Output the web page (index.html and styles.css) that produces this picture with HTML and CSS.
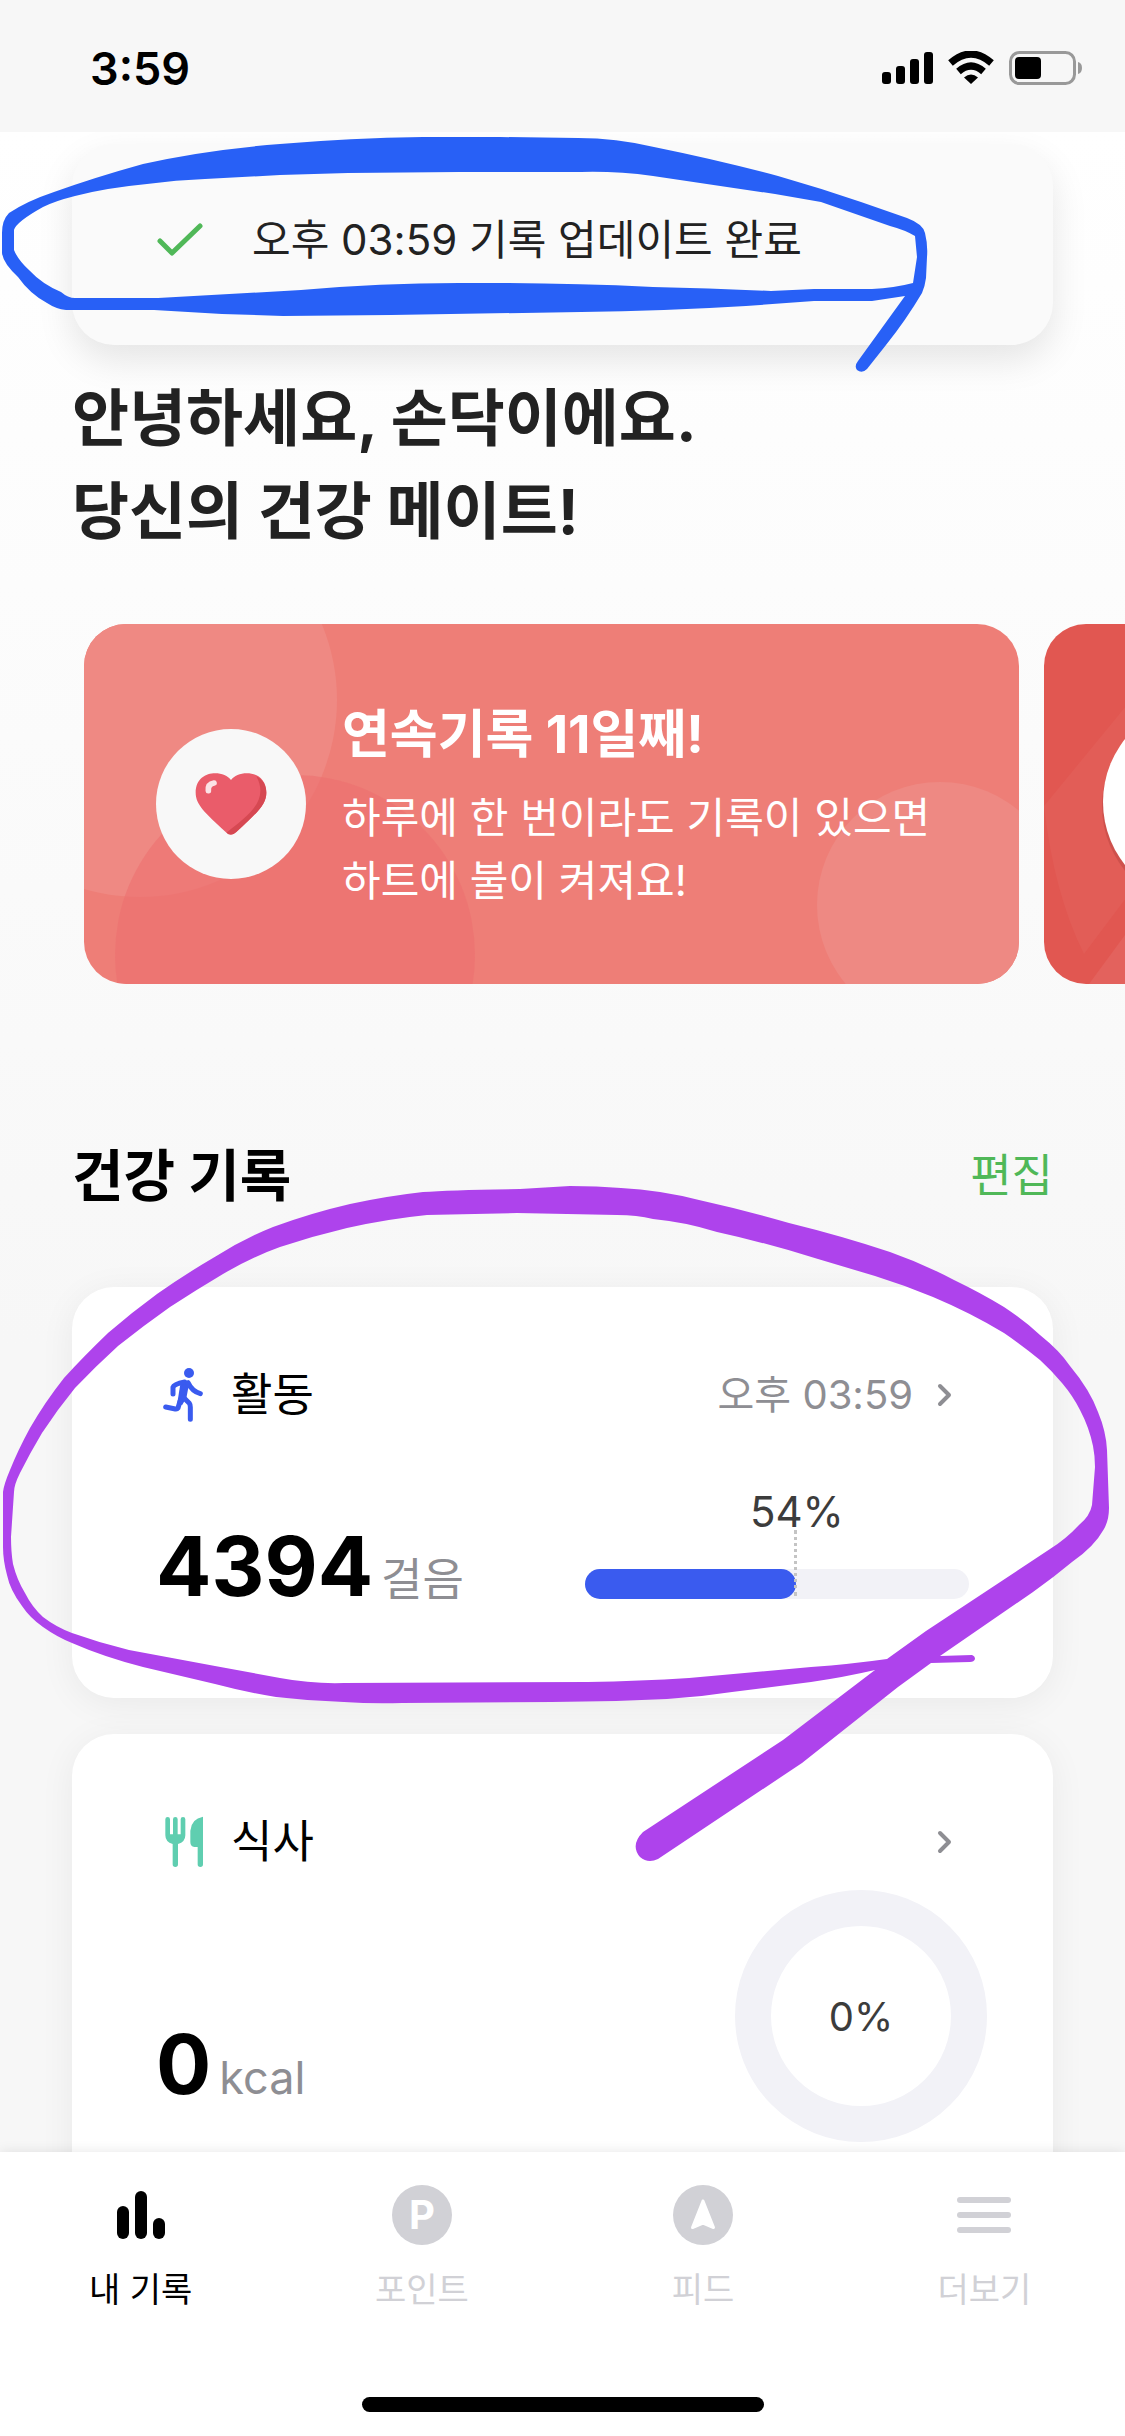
FILE: index.html
```html
<!DOCTYPE html>
<html lang="ko">
<head>
<meta charset="utf-8">
<meta name="viewport" content="width=device-width, initial-scale=1">
<title>내 기록</title>
<link rel="stylesheet" href="styles.css">
</head>
<body>
<div class="app">
  <header class="status">
    <time class="clock">3:59</time>
    <svg class="status-icons" width="202" height="36" viewBox="0 0 202 36" aria-hidden="true">
      <rect x="0" y="21" width="9" height="12" rx="3"/>
      <rect x="14" y="15" width="9" height="18" rx="3"/>
      <rect x="28" y="8" width="9" height="25" rx="3"/>
      <rect x="42" y="1" width="9" height="32" rx="3"/>
      <path d="M89 33 L82 26.500 Q89 20.500 96 26.500 Z"/>
      <path d="M76.500 20.500 Q89 9.500 101.500 20.500" fill="none" stroke="#000" stroke-width="7"/>
      <path d="M68.500 12 Q89 -6 109.500 12" fill="none" stroke="#000" stroke-width="7"/>
      <rect x="128.500" y="1.500" width="64" height="31" rx="9" fill="none" stroke="#999" stroke-width="3"/>
      <rect x="133" y="6" width="26" height="22" rx="4"/>
      <path d="M196 11 Q200 12 200 17 Q200 22 196 23 Z" fill="#999"/>
    </svg>
  </header>

  <main class="content">
    <div class="toast" role="status">
      <svg width="48" height="36" viewBox="0 0 48 36" aria-hidden="true"><path d="M4 19 L16 31 L44 4" fill="none" stroke="#50b858" stroke-width="5" stroke-linecap="round" stroke-linejoin="round"/></svg>
      <span>오후 03:59 기록 업데이트 완료</span>
    </div>

    <h1 class="greeting">안녕하세요, 손닥이에요.<br>당신의 건강 메이트!</h1>

    <div class="carousel">
      <article class="banner">
        <svg class="banner-art" viewBox="0 0 935 360" preserveAspectRatio="none" aria-hidden="true">
          <rect width="935" height="360" fill="#ee7e77"/>
          <circle cx="56" cy="76" r="197" fill="#ef8983"/>
          <circle cx="211" cy="331" r="180" fill="#ed6f6f" fill-opacity=".6"/>
          <circle cx="856" cy="281" r="123" fill="#ee8983"/>
        </svg>
        <div class="badge">
          <svg width="72" height="64" viewBox="0 0 216 192" aria-hidden="true">
            <path d="M108 24 C86 -8 2 -8 2 62 C2 98 30 122 92 180 Q108 196 124 180 C186 122 214 98 214 62 C214 -8 130 -8 108 24 Z" fill="#ea5c6a"/>
            <path d="M184 13 C206 24 214 42 214 62 C214 98 186 122 124 180 Q108 194 94 182 C150 136 226 90 184 13 Z" fill="#d64852"/>
            <path d="M40 56 Q38 36 57 33" fill="none" stroke="#fbe3e6" stroke-width="17" stroke-linecap="round"/>
          </svg>
        </div>
        <div class="banner-text">
          <h2>연속기록 11일째!</h2>
          <p>하루에 한 번이라도 기록이 있으면<br>하트에 불이 켜져요!</p>
        </div>
      </article>
      <article class="banner next-banner">
        <svg class="banner-art" viewBox="0 0 935 360" aria-hidden="true">
          <rect width="935" height="360" fill="#e15751"/>
          <path d="M0 182 L100 60 V250 L40 330 Q10 270 0 182 Z" fill="#e25d57"/>
          <path d="M45 360 L100 285 V360 Z" fill="#e3625d"/>
          <circle cx="160" cy="182" r="102" fill="#b94641" fill-opacity=".5"/>
          <circle cx="160" cy="178" r="101" fill="#fff"/>
        </svg>
      </article>
    </div>

    <div class="section-head">
      <h2>건강 기록</h2>
      <button type="button" class="edit">편집</button>
    </div>

    <section class="card">
      <a class="card-head" href="#activity">
        <svg width="40" height="56" viewBox="71 83 120 168" aria-hidden="true">
          <circle cx="149" cy="101" r="15" fill="#3a5bef"/>
          <path d="M124 128 Q140 118 150 130 L141 176 L128 198 L114 190 Z" fill="#3a5bef"/>
          <g fill="none" stroke="#3a5bef" stroke-width="15" stroke-linecap="round" stroke-linejoin="round">
            <path d="M136 128 Q104 134 101 144 V164"/>
            <path d="M146 130 Q158 156 183 163"/>
            <path d="M132 174 L150 192 Q153 196 153 204 V240"/>
            <path d="M122 186 L116 206 Q113 210 108 209 L79 203"/>
          </g>
        </svg>
        <span class="card-name">활동</span>
        <span class="card-time">오후 03:59</span>
        <svg class="chevron" width="16" height="24" viewBox="0 0 16 24" aria-hidden="true"><path d="M3 3 L12 12 L3 21" fill="none" stroke="#8e8e93" stroke-width="4" stroke-linecap="round" stroke-linejoin="round"/></svg>
      </a>
      <div class="card-body">
        <p class="value"><strong>4394</strong><span>걸음</span></p>
        <div class="progress">
          <div class="bar"><div class="fill" style="width:54.925%"></div></div>
          <div class="marker" style="left:54.925%"><span>54%</span></div>
        </div>
      </div>
    </section>

    <section class="card meal">
      <a class="card-head" href="#meal">
        <svg width="40" height="56" viewBox="71 72 120 168" aria-hidden="true" fill="#5fceb0">
          <path d="M78 88 a7 7 0 0 1 14 0 V133 H101 V88 a7 7 0 0 1 14 0 V133 H124 V88 a7 7 0 0 1 14 0 V136 Q138 156 116 162 V223 a8 8 0 0 1 -16 0 V162 Q78 156 78 136 Z"/>
          <path d="M191 80 V223 a8 8 0 0 1 -16 0 V171 H165 Q153 169 153 156 V122 Q156 86 191 80 Z"/>
        </svg>
        <span class="card-name">식사</span>
        <svg class="chevron" width="16" height="24" viewBox="0 0 16 24" aria-hidden="true"><path d="M3 3 L12 12 L3 21" fill="none" stroke="#8e8e93" stroke-width="4" stroke-linecap="round" stroke-linejoin="round"/></svg>
      </a>
      <div class="card-body">
        <p class="value"><strong>0</strong><span>kcal</span></p>
        <div class="ring">0%</div>
      </div>
    </section>
  </main>

  <nav class="tabs">
    <a class="tab active" href="#records">
      <svg width="60" height="60" viewBox="0 0 60 60" aria-hidden="true"><rect x="6" y="21" width="12" height="33" rx="6"/><rect x="24" y="6" width="12" height="48" rx="6"/><rect x="42" y="33" width="12" height="21" rx="6"/></svg>
      <span>내 기록</span>
    </a>
    <a class="tab" href="#points">
      <span class="coin">P</span>
      <span>포인트</span>
    </a>
    <a class="tab" href="#feed">
      <svg width="60" height="60" viewBox="0 0 60 60" aria-hidden="true"><circle cx="30" cy="30" r="30"/><path d="M30 16 L19.500 42.500 L30 38 L40.500 42.500 Z" fill="#fff" stroke="#fff" stroke-width="3" stroke-linejoin="round"/></svg>
      <span>피드</span>
    </a>
    <a class="tab" href="#more">
      <svg width="60" height="60" viewBox="0 0 60 60" aria-hidden="true"><rect x="3" y="12" width="54" height="6" rx="3"/><rect x="3" y="27" width="54" height="6" rx="3"/><rect x="3" y="42" width="54" height="6" rx="3"/></svg>
      <span>더보기</span>
    </a>
  </nav>
  <div class="home"><div class="home-bar"></div></div>

  <!-- hand-drawn marker strokes -->
  <svg class="markup" viewBox="0 0 1125 2436" aria-hidden="true" fill-rule="evenodd">
    <path fill="#2860f6" d="M423 137 L500 137 L578 138 Q616 138 654 147 Q718 160 778 176 Q820 188 861 202 L907 218 Q923 224 925 233 Q928 245 927 257 L926 278 Q925 286 922 293 Q906 320 886 345 L867 369 Q862 374 857 370 Q854 366 858 361 L905 296 L872 301 L814 301 L746 306 Q664 311 581 312 L391 315 L283 316 L222 314 L154 310 L66 310 Q56 309 47 303 Q30 294 18 277 Q3 263 2 253 L2 233 Q2 220 9 213 Q27 201 54 192 Q96 177 143 164 Q205 150 280 144 Q350 138 423 137 Z
      M459 172 L348 173 L280 175 L205 179 Q176 180 147 184 Q105 188 75 196 Q55 201 43 207 Q16 222 14 230 L14 250 Q18 260 29 270 Q42 284 61 292 Q68 298 75 298 L158 298 L301 290 Q380 283 459 283 L491 283 Q570 283 653 287 Q712 288 771 291 L814 289 L872 289 Q894 288 913 283 L917 257 L915 236 Q905 230 890 226 L821 202 L775 194 L653 176 Q616 171 581 172 Z"/>
    <path fill="#ae43ec" d="M570 1186 Q597 1186 621 1188 Q660 1190 699 1200 Q744 1210 789 1223 Q842 1236 890 1252 Q924 1264 954 1280 Q981 1293 1004 1307 Q1025 1321 1040 1335 Q1060 1351 1070 1366 Q1090 1390 1098 1412 Q1106 1431 1107 1450 L1109 1508 Q1109 1520 1104 1529 Q1094 1547 1072 1562 Q1054 1577 1033 1592 L940 1656 L972 1655 Q975 1656 975 1659 Q974 1662 970 1662 L931 1663 L898 1687 L802 1763 L658 1859 Q648 1864 640 1857 Q630 1845 643 1832 L783 1740 L875 1670 Q845 1677 811 1682 L732 1692 Q700 1697 667 1699 Q610 1702 552 1702 L402 1703 Q373 1704 344 1702 Q310 1701 276 1697 Q245 1692 215 1684 L143 1667 Q104 1657 72 1643 Q57 1637 43 1627 Q30 1618 22 1606 Q10 1590 7 1575 Q3 1560 3 1547 L3 1492 Q4 1484 10 1470 Q18 1450 30 1428 Q45 1402 64 1378 Q84 1356 108 1333 Q131 1313 157 1294 Q184 1275 213 1258 Q243 1239 273 1227 Q311 1213 350 1204 Q387 1196 423 1192 Q450 1190 520 1189 Z
      M517 1213 L427 1215 Q387 1219 347 1228 Q313 1236 280 1247 Q252 1257 223 1274 Q196 1290 170 1307 Q143 1326 118 1346 Q96 1366 75 1388 Q57 1410 42 1433 Q30 1453 20 1473 Q14 1485 14 1492 L11 1537 Q11 1552 13 1564 Q17 1580 25 1593 Q32 1607 43 1617 Q56 1627 72 1633 Q100 1643 129 1650 L215 1666 L280 1678 Q312 1684 344 1683 L588 1682 Q640 1681 689 1678 L811 1667 Q852 1664 887 1659 L926 1631 L1050 1549 Q1066 1539 1079 1525 Q1090 1516 1092 1505 L1095 1467 Q1095 1456 1093 1446 Q1089 1427 1080 1410 Q1073 1396 1062 1383 Q1052 1371 1040 1360 Q1023 1346 1004 1333 Q971 1313 933 1297 Q904 1285 875 1276 L818 1259 Q767 1243 717 1232 Q685 1222 653 1219 Q637 1215 617 1215 Z"/>
  </svg>
</div>
</body>
</html>
```
FILE: styles.css
```css
* {
  box-sizing: border-box;
}

body,
h1,
h2,
p {
  margin: 0;
}

body {
  font-family: Inter, "Noto Sans CJK KR", sans-serif;
  color: #000;
}

a {
  color: inherit;
  text-decoration: none;
}

.app {
  position: relative;
  display: flex;
  flex-direction: column;
  height: 100vh;
  overflow: hidden;
  background: #fff;
}

.status {
  flex: none;
  display: flex;
  align-items: center;
  justify-content: space-between;
  height: 132px;
  padding: 6px 41px 0 90px;
  background: #f7f7f7;
}

.clock {
  font-size: 45px;
  font-weight: 600;
  line-height: 54px;
}

.content {
  flex: 1;
  min-height: 0;
  overflow: hidden;
  padding: 12px 72px 0;
  background: linear-gradient(#fff, #f7f7f7 60%);
}

.toast {
  display: flex;
  align-items: center;
  gap: 48px;
  height: 201px;
  padding: 0 84px 9px;
  border-radius: 42px;
  background: #fafafa;
  box-shadow: 0 15px 36px rgba(0, 0, 0, 0.1);
  color: #222;
  font-size: 42px;
  line-height: 60px;
}

.greeting {
  margin-top: 27px;
  color: #222;
  font-size: 62px;
  font-weight: 700;
  line-height: 93px;
}

.carousel {
  display: flex;
  gap: 25px;
  margin: 66px -72px 0 12px;
  overflow: hidden;
}

.banner {
  position: relative;
  flex: none;
  display: flex;
  align-items: center;
  gap: 36px;
  width: calc(100vw - 190px);
  height: 360px;
  padding: 0 72px;
  border-radius: 42px;
  overflow: hidden;
  color: #fff;
}

.banner-art {
  position: absolute;
  inset: 0;
  width: 100%;
  height: 100%;
}

.badge {
  position: relative;
  display: grid;
  place-items: center;
  width: 150px;
  height: 150px;
  border-radius: 50%;
  background: #f8f8f8;
}

.banner-text {
  position: relative;
  padding-top: 9px;
}

.banner-text h2 {
  margin-bottom: 21px;
  font-size: 52px;
  font-weight: 700;
  line-height: 60px;
}

.banner-text p {
  font-size: 42px;
  line-height: 63px;
}

.section-head {
  display: flex;
  align-items: center;
  justify-content: space-between;
  margin: 156px 0 75px;
}

.section-head h2 {
  font-size: 56px;
  font-weight: 700;
  line-height: 72px;
}

.edit {
  padding: 0;
  border: 0;
  background: none;
  color: #50b858;
  font-family: inherit;
  font-size: 45px;
  line-height: 60px;
}

.card {
  display: flex;
  flex-direction: column;
  height: 411px;
  margin-bottom: 36px;
  padding: 78px 84px;
  border-radius: 42px;
  background: #fff;
  box-shadow: 0 6px 36px rgba(0, 0, 0, 0.06);
}

.card-head {
  display: flex;
  align-items: center;
  height: 60px;
  padding: 0 16px 0 7px;
}

.card-name {
  margin: 0 auto 0 28px;
  font-size: 45px;
  line-height: 60px;
}

.card-time {
  margin-right: 24px;
  color: #8e8e93;
  font-size: 40px;
  line-height: 60px;
}

.card-body {
  display: flex;
  align-items: flex-end;
  justify-content: space-between;
  margin-top: 94px;
}

.value {
  display: flex;
  align-items: baseline;
  gap: 8px;
  line-height: 96px;
}

.value strong {
  font-size: 82px;
  font-weight: 700;
}

.value span {
  color: #8e8e93;
  font-size: 45px;
}

.progress {
  position: relative;
  width: 384px;
  padding-bottom: 29px;
}

.bar {
  height: 30px;
  border-radius: 15px;
  background: #f2f2f7;
}

.fill {
  height: 100%;
  border-radius: 15px;
  background: #3a5bef;
}

.marker {
  position: absolute;
  bottom: 32px;
  display: flex;
  justify-content: center;
  width: 0;
  height: 66px;
  margin-left: -2px;
  border-left: 3px dotted #c4c4c4;
}

.marker span {
  position: absolute;
  bottom: 60px;
  color: #3c3c3c;
  font-size: 42px;
  line-height: 48px;
}

.meal {
  height: 480px;
}

.meal .card-body {
  margin: 18px -18px 0 0;
}

.meal .value {
  padding-bottom: 16px;
}

.ring {
  display: grid;
  place-items: center;
  width: 252px;
  height: 252px;
  border: 36px solid #f2f2f7;
  border-radius: 50%;
  color: #3c3c3c;
  font-size: 40px;
}

.tabs {
  position: relative;
  flex: none;
  display: flex;
  padding: 33px 0 71px;
  background: #fff;
  box-shadow: 0 0 12px rgba(0, 0, 0, 0.1);
}

.tab {
  flex: 1;
  display: flex;
  flex-direction: column;
  align-items: center;
  gap: 21px;
  color: #d1d1d6;
  fill: #d1d1d6;
  font-size: 34px;
  line-height: 48px;
}

.active {
  color: #000;
  fill: #000;
}

.coin {
  width: 60px;
  height: 60px;
  border-radius: 50%;
  background: #d1d1d6;
  color: #fff;
  font-size: 40px;
  font-weight: 700;
  line-height: 60px;
  text-align: center;
}

.home {
  position: relative;
  flex: none;
  display: flex;
  justify-content: center;
  padding: 12px 0 24px;
  background: #fff;
}

.home-bar {
  width: 402px;
  height: 15px;
  border-radius: 8px;
  background: #000;
}

.markup {
  position: absolute;
  top: 0;
  left: 0;
  width: 100%;
  pointer-events: none;
}
```
